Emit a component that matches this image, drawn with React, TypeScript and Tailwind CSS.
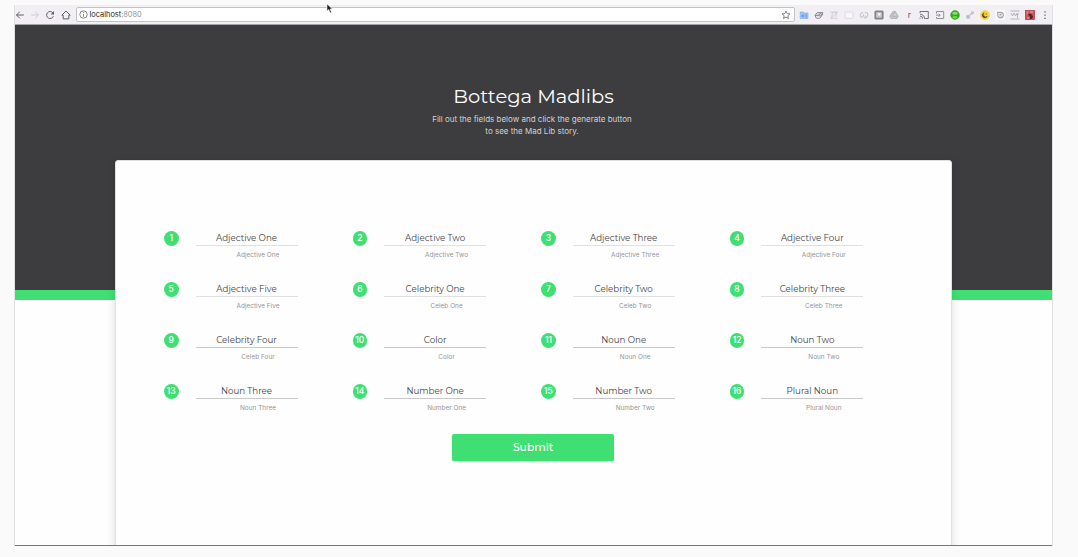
import React from "react";

const fields: [string, string][] = [
  ["Adjective One", "Adjective One"],
  ["Adjective Two", "Adjective Two"],
  ["Adjective Three", "Adjective Three"],
  ["Adjective Four", "Adjective Four"],
  ["Adjective Five", "Adjective Five"],
  ["Celebrity One", "Celeb One"],
  ["Celebrity Two", "Celeb Two"],
  ["Celebrity Three", "Celeb Three"],
  ["Celebrity Four", "Celeb Four"],
  ["Color", "Color"],
  ["Noun One", "Noun One"],
  ["Noun Two", "Noun Two"],
  ["Noun Three", "Noun Three"],
  ["Number One", "Number One"],
  ["Number Two", "Number Two"],
  ["Plural Noun", "Plural Noun"],
];

function Icon({ children, color = "#5f6063", width = 1 }: { children: React.ReactNode; color?: string; width?: number }) {
  return (
    <svg className="size-[10px] shrink-0" viewBox="0 0 10 10" fill="none" stroke={color} strokeWidth={width}>
      {children}
    </svg>
  );
}

function Extensions() {
  return (
    <div className="ml-[4px] flex items-center gap-[5.12px]">
      <Icon color="#7fb0ee" width={0.7}>
        <path d="M1.2 2h3l.8 1h4v5.5H1.2z" fill="#9cc2f4" />
        <path d="M3.8 4.6v2.6M2.5 5.9h2.6M6.2 5.2h1.6M6.2 7h1.6" stroke="#4c86d8" strokeWidth=".7" />
      </Icon>
      <Icon color="#77777a" width={0.8}>
        <path d="M1 5.3 3.2 2.6h5.8L6.8 6z" fill="#dcdbde" />
        <path d="m1 5.3 1.2 2.8 3.6.2L9 4M4.2 5.2 7.6 2.8" />
      </Icon>
      <Icon color="#d0ced2" width={0.9}>
        <path d="M2.5 8.5 3.5 2.2h4.2L6.8 7M1 2.2h7M7.8 1v2.6M2.5 8.2 7.2 3M1 8.2h5L9 9" />
      </Icon>
      <Icon color="#d8d7da" width={0.9}>
        <rect x="1" y="2" width="8" height="6.3" rx="1" fill="#f7f6f8" />
      </Icon>
      <Icon color="#c6c5c8" width={1.1}>
        <path d="M4 2.3C1.6 3 .8 4.7 1.4 6.2s1.7 1.5 2.6.4L4.8 4M5.8 2.6c2-.6 3.3.5 3 2.4S7.6 8 5.7 8l1-2.4" />
      </Icon>
      <Icon color="#858587" width={1.8}>
        <rect x="1.3" y="1.3" width="7.4" height="7.4" rx=".6" fill="#c9c9cb" />
        <path d="M4.6 3.4h1.6v1.8H4.6z" fill="#fff" stroke="#fff" strokeWidth=".5" />
      </Icon>
      <Icon color="#b6b5b8" width={1.2}>
        <path d="M4.2 1.7h1.9L9 6.3 7.8 8.4H2.2L1 6.3z" fill="#d6d5d8" />
        <path d="M3 6.3h6M5.8 2.1 3 7" />
      </Icon>
      <span className="w-[10px] text-center text-[8.5px] leading-[10px] text-[#606064]">r</span>
      <Icon color="#737377">
        <path d="M1 3V1.5h8.3v7H6.2M1 8.8v-.9M1 6a3 3 0 0 1 2.8 2.8M1 4.2a4.5 4.5 0 0 1 4.6 4.6" />
      </Icon>
      <Icon color="#929296">
        <path d="M1.5 3.7V1.5h7.2v7H1.5V7M1 5.2h4M3.6 3.6 5.2 5.2 3.6 6.8" />
      </Icon>
      <Icon color="#279c18" width={0.5}>
        <circle cx="5" cy="5" r="4.4" fill="#2dad18" />
        <ellipse cx="5" cy="3.2" rx="2.9" ry="1.5" fill="#8edb70" stroke="none" />
        <ellipse cx="5" cy="7.3" rx="2.6" ry="1.3" fill="#5fe32e" stroke="none" />
      </Icon>
      <Icon color="#c1c0c3" width={1.3}>
        <circle cx="3.1" cy="6.8" r="1.5" fill="#c1c0c3" />
        <circle cx="7.4" cy="2.8" r="1" />
        <path d="m4.3 5.6 2.3-2" />
      </Icon>
      <Icon color="#ecc936" width={0.5}>
        <circle cx="5" cy="5" r="4.5" fill="#fbd934" />
        <path d="M4.2 2.7A2.6 2.6 0 1 0 7.3 6.2 2.2 2.2 0 0 1 4.2 2.7z" fill="#49315c" stroke="#49315c" />
        <circle cx="6.2" cy="4" r=".8" fill="#a46b35" stroke="none" />
      </Icon>
      <Icon color="#a4a3a6" width={1.2}>
        <rect width="10" height="10" fill="#fafafa" stroke="none" />
        <path d="M2 2.3h3.4a2.8 2.8 0 1 1-2.6 2.8V2.5M4.4 4.4h2.2M4.4 6h2.2" />
      </Icon>
      <Icon color="#b5b4b7">
        <path d="M.5 1h9M.5 9h9M1 3l1.5 3L4 3l1.5 3L7 3M6 4h3M7.5 4v4" />
      </Icon>
      <Icon color="#b13338" width={0.7}>
        <rect x=".5" y=".5" width="9" height="9" fill="#cd5558" />
        <path d="m3 4.6 2-1.2 1.8 1 1.2 2-1 2.6H5.2L4.8 6.6z" fill="#572527" stroke="none" />
        <path d="M1.5 2h2M5 2h3M1.6 4h1M2 8h2" stroke="#f4c8c4" />
      </Icon>
      <Icon color="#626266">
        <path d="M5 1.2v1.3M5 4.5v1.3M5 7.8v1.3" strokeWidth="1.3" />
      </Icon>
    </div>
  );
}

function BrowserBar() {
  return (
    <div className="flex h-5 shrink-0 items-center border-b border-[#a5a5a7] bg-[#f1eff3]">
      <div className="flex items-center gap-[5.2px]">
        <Icon><path d="M8.8 5H1.5M4.8 1.7 1.5 5l3.3 3.3" /></Icon>
        <Icon color="#cfced2"><path d="M1.2 5h7.3M5.2 1.7 8.5 5 5.2 8.3" /></Icon>
        <Icon><path d="M8.4 6.2A3.5 3.5 0 1 1 7.9 2.9" /><path d="M9 1.1v3.3H5.7z" fill="#5f6063" stroke="none" /></Icon>
        <Icon><path d="M.8 5.2 5 1l4.2 4.2H7.8v3.7H2.2V5.2z" /></Icon>
      </div>
      <div className="ml-[5px] flex h-[15px] w-[719px] items-center rounded-[2px] border border-[#c3c2c5] bg-white pl-[2px] pr-[3px]">
        <svg className="size-[9px]" viewBox="0 0 9 9" fill="none" stroke="#666" strokeWidth=".8">
          <circle cx="4.5" cy="4.5" r="3.7" /><path d="M4.5 4v2.7M4.5 2.1v1" />
        </svg>
        <span className="ml-[2px] flex-1 text-[7.4px] leading-[10px] text-[#222]">localhost<span className="text-[#929292]">:8080</span></span>
        <Icon color="#626266" width={0.8}><path d="m5 1.1 1.15 2.5 2.75.3L6.85 5.7l.6 2.8L5 7.1 2.55 8.5l.6-2.8L1.1 3.9l2.75-.3z" /></Icon>
      </div>
      <Extensions />
    </div>
  );
}

function Field({ number, label, caption }: { number: number; label: string; caption: string }) {
  return (
    <div className="flex h-[51px] items-start">
      <span className="flex size-[14.5px] shrink-0 items-center justify-center rounded-full bg-[#3fdf74] text-[8.5px] font-medium leading-none text-white">{number}</span>
      <div className="ml-[17px] w-[102px] text-center">
        <div className={`h-[15px] border-b font-['Montserrat','Inter',sans-serif] text-[8.7px] leading-[14px] text-[#444446] ${number > 8 ? "border-[#c9c9cb]" : "border-[#e1e1e3]"}`}>{label}</div>
        <div className="mt-[4px] pl-[23px] text-[6.4px] leading-[10px] tracking-[0.04px] text-[#949496]">{caption}</div>
      </div>
    </div>
  );
}

export default function App() {
  return (
    <div className="relative flex h-[557px] w-[1078px] flex-col overflow-hidden bg-[#fafafa] pl-[14px] pt-[5px] font-['Inter',sans-serif]">
      <div className="flex h-[541px] w-[1039px] flex-col overflow-hidden border-x border-[#e1e1e3]">
        <BrowserBar />
        <main className="grid h-[521px] grid-cols-1 grid-rows-1 overflow-hidden border-b border-[#77777b] bg-[#fefefe]">
          <div className="col-start-1 row-start-1 h-[275px] border-b-[10px] border-[#3fdf74] bg-[#3d3d3f]" />
          <div className="z-10 col-start-1 row-start-1 flex flex-col items-center">
            <header className="flex h-[135px] shrink-0 flex-col items-center pt-[58px] text-center">
              <h1 className="font-['Montserrat','Inter',sans-serif] text-[19.5px] font-normal leading-[27px] text-white">Bottega Madlibs</h1>
              <p className="mt-[3px] pr-[3px] text-[8px] leading-[12px] text-[#d3d2d5]">Fill out the fields below and click the generate button<br />to see the Mad Lib story.</p>
            </header>
            <section className="flex h-[400px] w-[837px] shrink-0 flex-col rounded-[3px] border border-[#e1e1e3] bg-[#fefefe] px-[48px] pt-[70px] shadow-[0_2px_8px_rgba(0,0,0,0.13)]">
              <div className="grid grid-cols-[repeat(4,188.6px)]">
                {fields.map(([label, caption], i) => <Field key={i} number={i + 1} label={label} caption={caption} />)}
              </div>
              <button className="-mt-px ml-[288px] h-[27px] w-[162px] shrink-0 rounded-[2px] bg-[#3fdf74] font-['Montserrat','Inter',sans-serif] text-[10.8px] font-medium leading-[27px] text-white shadow-[0_1px_2px_rgba(0,0,0,0.16)]">Submit</button>
            </section>
          </div>
        </main>
      </div>
      <svg className="absolute left-[326px] top-[3px] h-[11px] w-[8px]" viewBox="0 0 8 11">
        <path d="M1 1v7l1.7-1.5L4.2 10l1.3-.6L4 6h2.4z" fill="#222" stroke="#fff" strokeWidth=".5" />
      </svg>
    </div>
  );
}
